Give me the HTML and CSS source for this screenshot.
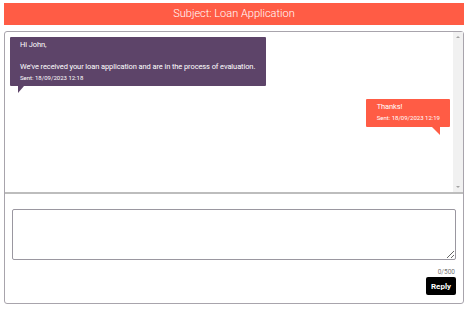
FILE: index.html
```html
<!DOCTYPE html>
<html>
<head>
<meta charset="utf-8">
<link rel="stylesheet" href="styles.css">
</head>
<body>
<div class="page">
  <div class="header">Subject: Loan Application</div>
  <div class="panel">
    <div class="messages-wrap">
      <div class="messages">
        <div class="msg msg-in">
          <div class="bubble bubble-in">
            <p>Hi John,</p>
            <p>&nbsp;</p>
            <p>We've received your loan application and are in the process of evaluation.</p>
            <p class="sent">Sent: 18/09/2023 12:18</p>
          </div>
        </div>
        <div class="msg msg-out">
          <div class="bubble bubble-out">
            <p>Thanks!</p>
            <p class="sent">Sent: 18/09/2023 12:19</p>
          </div>
        </div>
      </div>
      <div class="scrollbar">
        <span class="arrow arrow-up"></span>
        <span class="arrow arrow-down"></span>
      </div>
    </div>
    <div class="compose">
      <textarea class="input"></textarea>
      <div class="count">0/500</div>
      <div class="actions"><button class="reply">Reply</button></div>
    </div>
  </div>
</div>
</body>
</html>
```

FILE: styles.css
```css
* { box-sizing: border-box; }
html, body { margin: 0; padding: 0; background: #fff; }
body { font-family: Roboto, "Liberation Sans", sans-serif; }
.page { padding: 3px 5px 0 4px; }
.header {
  height: 22px;
  background: #ff5c45;
  color: #fff;
  font-size: 11px;
  font-weight: 300;
  text-align: center;
  line-height: 22px;
}
.panel {
  margin-top: 6px;
  border: 1px solid #a8a4ac;
  border-radius: 3px;
  height: 273px;
  display: flex;
  flex-direction: column;
}
.messages-wrap {
  height: 162px;
  display: flex;
  border-bottom: 2px solid #bdbdbd;
}
.messages {
  flex: 1;
  padding: 5px 3px 0 5px;
}
.scrollbar {
  width: 10px;
  background: #f1f1f1;
  display: flex;
  flex-direction: column;
  justify-content: space-between;
  align-items: center;
  padding: 4px 0 4px;
}
.arrow {
  width: 0;
  height: 0;
  border-left: 2px solid transparent;
  border-right: 2px solid transparent;
}
.arrow-up { border-bottom: 2px solid #a3a3a3; }
.arrow-down { border-top: 2px solid #a3a3a3; }
.messages p { margin: 0; }
.msg { display: flex; }
.msg-out { justify-content: flex-end; margin-top: 13px; }
.bubble {
  position: relative;
  color: #fff;
  font-size: 7.5px;
  letter-spacing: -0.1px;
  line-height: 11px;
  border-radius: 1px;
}
.bubble-in {
  background: #5d4469;
  padding: 2px 8px 3px 10px;
  width: 256px;
}
.bubble-out {
  background: #ff5c45;
  padding: 2px 10px 4px 11px;
}
.bubble .sent { font-size: 6px; line-height: 11px; letter-spacing: 0; }
.bubble-in::after {
  content: "";
  position: absolute;
  left: 8px;
  bottom: -7px;
  border-left: 6px solid #5d4469;
  border-bottom: 7px solid transparent;
}
.bubble-out::after {
  content: "";
  position: absolute;
  right: 10px;
  bottom: -8px;
  border-right: 8px solid #ff5c45;
  border-bottom: 8px solid transparent;
}
.compose {
  flex: 1;
  padding: 15px 7px 0 7px;
  display: flex;
  flex-direction: column;
}
.input {
  height: 51px;
  border: 1px solid #9a97a0;
  border-radius: 2px;
  resize: vertical;
  width: 100%;
}
.count {
  text-align: right;
  font-size: 6.5px;
  color: #777;
  margin-top: 8px;
  padding-right: 1px;
}
.actions { display: flex; justify-content: flex-end; margin-top: 1px; }
.reply {
  background: #000;
  color: #fff;
  border: none;
  border-radius: 2px;
  font-family: Roboto, sans-serif;
  font-weight: 700;
  font-size: 8px;
  width: 30px;
  height: 18px;
  padding: 0;
}
```
